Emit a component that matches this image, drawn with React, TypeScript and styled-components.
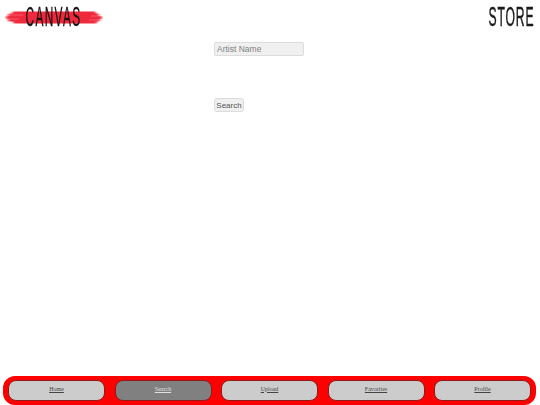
import styled, { createGlobalStyle } from 'styled-components';

const tabs = ['Home', 'Search', 'Upload', 'Favorites', 'Profile'];

const BrushStroke = () => (
  <BrushSvg viewBox="0 0 98 15" preserveAspectRatio="none">
    <defs>
      <filter id="brushBlur" x="-8%" y="-30%" width="116%" height="160%">
        <feGaussianBlur stdDeviation="1.4 0.7" />
      </filter>
    </defs>
    <g filter="url(#brushBlur)" fill="#f02a3c">
      <rect x="7" y="1.5" width="84" height="3" rx="1.5" />
      <rect x="3" y="3.5" width="91" height="3" rx="1.5" />
      <rect x="1" y="6" width="96" height="3" rx="1.5" />
      <rect x="3" y="8.5" width="92" height="3" rx="1.5" />
      <rect x="8" y="10.5" width="84" height="3" rx="1.5" />
    </g>
    <g stroke="#fbb0b5" strokeWidth="0.5" opacity="0.7">
      <line x1="1" y1="5" x2="18" y2="5" />
      <line x1="2" y1="9" x2="14" y2="9" />
      <line x1="86" y1="6" x2="97" y2="6" />
      <line x1="84" y1="10" x2="95" y2="10" />
    </g>
  </BrushSvg>
);

const App = () => {
  return (
    <Page>
      <GlobalStyle />
      <Header>
        <Logo>
          <BrushStroke />
          <LogoText>CANVAS</LogoText>
        </Logo>
        <StoreText>STORE</StoreText>
      </Header>
      <SearchForm>
        <ArtistInput placeholder="Artist Name" />
        <SearchButton type="button">Search</SearchButton>
      </SearchForm>
      <BottomNav>
        {tabs.map(tab => (
          <NavButton key={tab} $active={tab === 'Search'} href="#">
            {tab}
          </NavButton>
        ))}
      </BottomNav>
    </Page>
  );
};

export default App;

const GlobalStyle = createGlobalStyle`
  html, body {
    margin: 0;
    padding: 0;
    background-color: white;
  }
`;

const Page = styled.div`
  width: 540px;
  height: 405px;
  display: flex;
  flex-direction: column;
  overflow: hidden;
  font-family: 'Liberation Sans', Arial, sans-serif;
`;

const Header = styled.div`
  height: 34px;
  padding: 0 5px;
  display: flex;
  justify-content: space-between;
  align-items: center;
`;

const Logo = styled.div`
  width: 98px;
  height: 15px;
  position: relative;
  display: flex;
  justify-content: center;
  align-items: center;
`;

const BrushSvg = styled.svg`
  position: absolute;
  inset: 0;
  width: 100%;
  height: 100%;
`;

const LogoText = styled.div`
  position: relative;
  font-family: 'Liberation Sans', sans-serif;
  font-size: 27px;
  line-height: 27px;
  color: #1a1014;
  -webkit-text-stroke: 0.3px #1a1014;
  letter-spacing: 3px;
  transform: scaleX(0.44);
  margin-left: -1px;
`;

const StoreText = styled.div`
  font-family: 'Liberation Sans', sans-serif;
  font-size: 27px;
  line-height: 27px;
  color: #1a1a1a;
  -webkit-text-stroke: 0.5px #1a1a1a;
  letter-spacing: 2px;
  transform: scaleX(0.45);
  transform-origin: right center;
`;

const SearchForm = styled.div`
  flex: 1;
  padding: 8px 0 0 214px;
  display: flex;
  flex-direction: column;
  align-items: flex-start;
  gap: 42px;
`;

const ArtistInput = styled.input`
  width: 90px;
  height: 14px;
  box-sizing: border-box;
  padding: 0 2px;
  font-family: 'Liberation Sans', sans-serif;
  font-size: 8.5px;
  background-color: #f0f0f0;
  border: 1px solid #dcdcdc;
  border-radius: 2px;
  outline: none;

  &::placeholder {
    color: #808080;
    opacity: 1;
  }
`;

const SearchButton = styled.button`
  width: 30px;
  height: 14px;
  box-sizing: border-box;
  padding: 0;
  font-family: 'Liberation Sans', sans-serif;
  font-size: 8px;
  color: #555;
  background-color: #f0f0f0;
  border: 1px solid #dcdcdc;
  border-radius: 3px;
`;

const BottomNav = styled.div`
  height: 29px;
  margin: 0 4px 0 3px;
  padding: 4px 5px;
  box-sizing: border-box;
  background-color: #ff0000;
  border-radius: 12px;
  display: flex;
  justify-content: space-between;
`;

const NavButton = styled.a<{ $active?: boolean }>`
  width: 97px;
  height: 21px;
  box-sizing: border-box;
  padding-bottom: 4px;
  display: flex;
  justify-content: center;
  align-items: center;
  font-family: 'Liberation Serif', serif;
  font-size: 6px;
  color: ${({ $active }) => ($active ? '#e0e0e0' : '#444')};
  text-decoration: underline;
  background-color: ${({ $active }) => ($active ? '#808080' : '#cccccc')};
  border: 1px solid #8c1c1c;
  border-radius: 8px;
`;
